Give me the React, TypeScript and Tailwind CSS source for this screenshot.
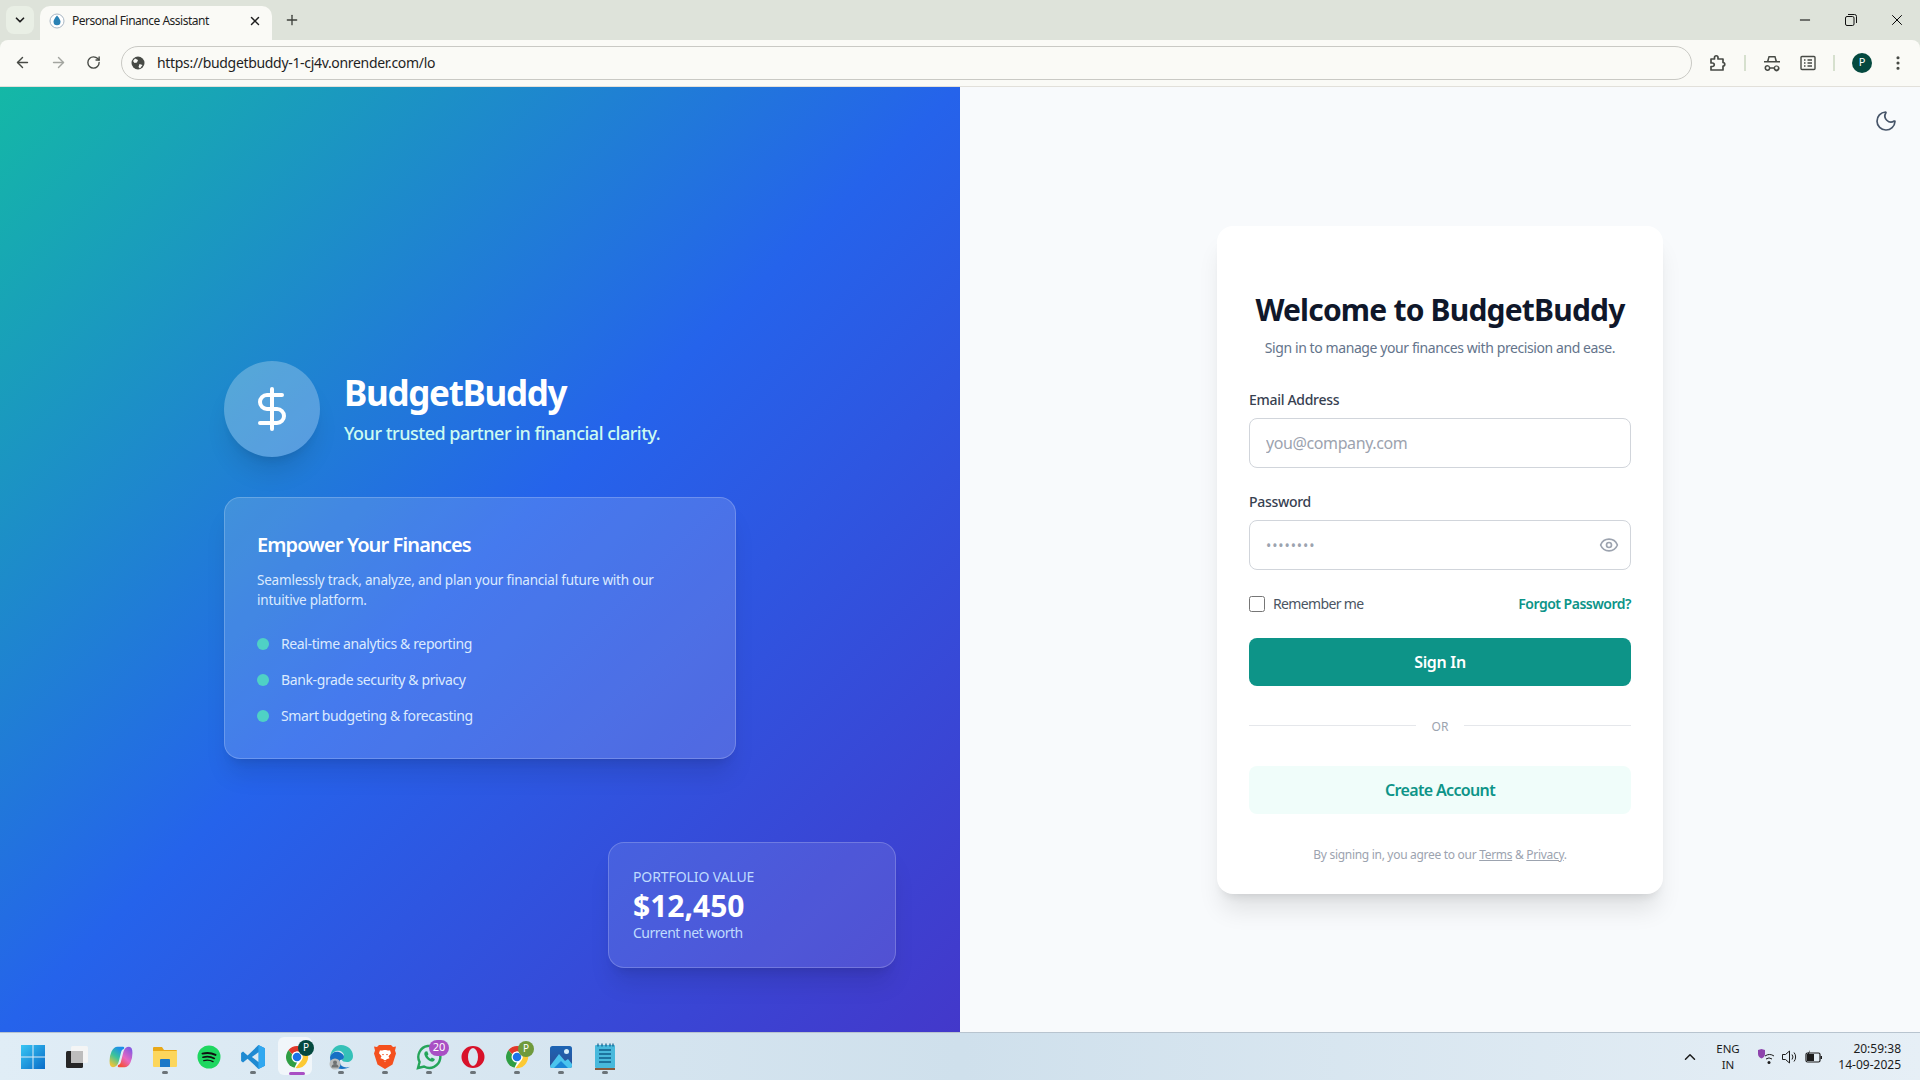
import { ArrowLeft, ArrowRight, ChevronDown, ChevronUp, DollarSign, EllipsisVertical, Eye, Minus, Moon, Plus, RotateCw, X } from "lucide-react";
import type { ReactNode } from "react";

function ChromeLogo({ size = 24 }: { size?: number }) {
  return (
    <svg width={size} height={size} viewBox="0 0 48 48">
      <circle cx="24" cy="24" r="22" fill="#fff" />
      <path d="M7.03 9.95 14.47 18.5 24 35 19 45.4A22 22 0 0 1 7.03 9.95Z" fill="#2f9e44" />
      <path d="M43.05 13H24a11 11 0 0 1 9.53 16.5L21 46A22 22 0 0 0 43.05 13Z" fill="#fcc934" />
      <path d="M24 2a22 22 0 0 1 19.05 11H24a11 11 0 0 0-9.53 5.5L7.03 9.95A22 22 0 0 1 24 2Z" fill="#e0392b" />
      <circle cx="24" cy="24" r="11" fill="#fff" />
      <circle cx="24" cy="24" r="8.5" fill="#1a73e8" />
    </svg>
  );
}

function Badge({ text, className }: { text: string; className: string }) {
  return (
    <span className={`absolute flex items-center justify-center rounded-full text-white font-['Noto_Sans',sans-serif] ${className}`}>
      {text}
    </span>
  );
}

const windowsIcon = (
  <svg width="24" height="24" viewBox="0 0 24 24">
    <defs>
      <linearGradient id="win" x1="0" y1="0" x2="1" y2="1">
        <stop offset="0" stopColor="#38c6f4" />
        <stop offset="1" stopColor="#0a6cc8" />
      </linearGradient>
    </defs>
    <path d="M0 0h11.5v11.5H0zM12.5 0H24v11.5H12.5zM0 12.5h11.5V24H0zM12.5 12.5H24V24H12.5z" fill="url(#win)" />
  </svg>
);

const taskViewIcon = (
  <svg width="24" height="24" viewBox="0 0 24 24">
    <rect x="6" y="1" width="17" height="17" rx="1.5" fill="#f4f5f5" />
    <rect x="1" y="6" width="17" height="17" rx="1.5" fill="#262626" />
    <rect x="6" y="6" width="12" height="12" fill="#bdbdbd" />
  </svg>
);

const copilotIcon = (
  <svg width="24" height="22" viewBox="0 0 24 22">
    <defs>
      <linearGradient id="copilotLeft" x1="0.7" y1="0" x2="0.2" y2="1">
        <stop offset="0" stopColor="#1c8fe8" />
        <stop offset="0.5" stopColor="#3cc49a" />
        <stop offset="1" stopColor="#e8c43c" />
      </linearGradient>
      <linearGradient id="copilotRight" x1="0.8" y1="0" x2="0.2" y2="1">
        <stop offset="0" stopColor="#8a5ae0" />
        <stop offset="0.55" stopColor="#e868c0" />
        <stop offset="1" stopColor="#f4503c" />
      </linearGradient>
    </defs>
    <path
      d="M8.500 2H14c-1.500.3-2.500 1.500-3 3.500L8.500 15.500C7.800 18 6 20 4 20 2.500 20 1.800 18 1.800 15c0-6.500 2.700-13 6.700-13Z"
      fill="url(#copilotLeft)"
      stroke="url(#copilotLeft)"
      strokeWidth="2.500"
      strokeLinejoin="round"
    />
    <path
      d="M15.500 20H10c1.500-.3 2.500-1.500 3-3.500l2.500-10C16.200 4 18 2 20 2c1.500 0 2.200 2 2.200 5 0 6.500-2.700 13-6.700 13Z"
      fill="url(#copilotRight)"
      stroke="url(#copilotRight)"
      strokeWidth="2.500"
      strokeLinejoin="round"
    />
  </svg>
);

const filesIcon = (
  <svg width="26" height="26" viewBox="0 0 26 26">
    <path d="M1 4a1 1 0 0 1 1-1h8l2 3h12a1 1 0 0 1 1 1v2H1Z" fill="#e8a818" />
    <path d="M1 7h24v15a1 1 0 0 1-1 1H2a1 1 0 0 1-1-1Z" fill="#fcd65c" />
    <path d="M8 16a1 1 0 0 1 1-1h8a1 1 0 0 1 1 1v7H8Z" fill="#1a78c8" />
  </svg>
);

const spotifyIcon = (
  <svg width="24" height="24" viewBox="0 0 24 24">
    <circle cx="12" cy="12" r="11.5" fill="#1ed760" />
    <g fill="none" stroke="#111" strokeLinecap="round">
      <path d="M5.5 8.6c4.5-1.2 9-.8 13 1.3" strokeWidth="2" />
      <path d="M6 12.2c4-1 8-.6 11.3 1.2" strokeWidth="1.7" />
      <path d="M6.8 15.6c3.2-.8 6.4-.5 9.2 1" strokeWidth="1.4" />
    </g>
  </svg>
);

const vscodeIcon = (
  <svg width="26" height="26" viewBox="0 0 24 24">
    <path d="M17 1 23 4v16l-6 3-10-9.5L2.8 17 1 15.8V8.2L2.8 7 7 10.500Z" fill="#1f8ad2" />
    <path d="M17 1 23 4v16l-6 3Z" fill="#31a8f0" />
    <path d="M17 7.500 11 12l6 4.500Z" fill="#dceaf3" />
  </svg>
);

const edgeIcon = (
  <svg width="26" height="26" viewBox="0 0 26 26">
    <path d="M13 1c7 0 12 5 12 11 0 4-3 6-6 6-3 0-5-1-5-2 0-1 2-1 2-4 0-4-4-6-8-5-3 1-5 3-6 6C3 6 7 1 13 1Z" fill="#35c1b8" />
    <path d="M2 13c1-4 5-6 9-5 3 1 5 3 5 5 0 2-2 3-4 3-1 3 1 6 4 7 3 1 6 0 7-1-2 2-6 3-9 3C7 25 2 20 2 13Z" fill="#1670c4" />
    <circle cx="7" cy="20" r="5.500" fill="#b9bcbc" />
    <circle cx="7" cy="18.500" r="2" fill="#6f7272" />
    <path d="M3.500 23.500a3.500 3.500 0 0 1 7 0Z" fill="#6f7272" />
  </svg>
);

const braveIcon = (
  <svg width="24" height="26" viewBox="0 0 24 26">
    <path d="M6 1h12l2 2 3-.5-1 4 1 3-3.500 11L12 25l-7.500-4.500L1 9.500l1-3-1-4 3 .5Z" fill="#f4501e" />
    <path d="M12 6c2 0 3 .8 5 .3l1 3-2.500 3 1 2-3 1-1.500 3-1.500-3-3-1 1-2L6 9.300l1-3c2 .5 3-.3 5-.3Z" fill="#fff" />
    <path d="M9 10h2l-1 1.500ZM13 10h2l-1 1.500ZM10.500 16h3L12 17.500Z" fill="#f4501e" />
  </svg>
);

const whatsappIcon = (
  <svg width="26" height="26" viewBox="0 0 26 26">
    <path d="M2 24l1.600-6A11 11 0 1 1 8 22.500Z" fill="none" stroke="#25a55a" strokeWidth="2.400" />
    <path d="M9.500 7.500c-1 .5-1.500 2-1 3.500 1 3 3.500 5.500 6.500 6.500 1.500.4 3 0 3.500-1.200l.3-1.300-3-1.500-1 1.200c-1.500-.6-2.700-1.800-3.300-3.300l1-1.200-1.300-2.900Z" fill="#25a55a" />
  </svg>
);

const operaIcon = (
  <svg width="24" height="24" viewBox="0 0 24 24">
    <path
      fillRule="evenodd"
      d="M12 1a11.500 11 0 1 1 0 22 11.500 11 0 0 1 0-22Zm0 2a5 9 0 1 0 0 18 5 9 0 0 0 0-18Z"
      fill="#d8122a"
    />
  </svg>
);

const photosIcon = (
  <svg width="24" height="24" viewBox="0 0 24 24">
    <defs>
      <linearGradient id="photo" x1="0" y1="0" x2="0" y2="1">
        <stop offset="0" stopColor="#1c64b4" />
        <stop offset="1" stopColor="#2e4f96" />
      </linearGradient>
    </defs>
    <rect x="1" y="1" width="22" height="22" rx="2.500" fill="url(#photo)" />
    <circle cx="17.500" cy="6.500" r="2.500" fill="#d6eefa" />
    <path d="M1 21 10 9l6 7 3-2 4 5v2a2 2 0 0 1-2 2H3a2 2 0 0 1-2-2Z" fill="#4ac4ee" />
    <path d="M5 23l7-7 7 7Z" fill="#1a86d6" />
  </svg>
);

const notepadIcon = (
  <svg width="22" height="28" viewBox="0 0 22 28">
    <rect x="1" y="2" width="20" height="23" rx="1" fill="#48b9dc" />
    <rect x="1" y="25" width="20" height="2" fill="#8a5a3c" />
    <path d="M5 7h12M5 11h12M5 15h12M5 19h12" stroke="#0f5d8a" strokeWidth="1.600" />
    <path d="M4 .5v3M8 .5v3M12 .5v3M16 .5v3M19 .5v3" stroke="#0f5d8a" strokeWidth="1.200" />
  </svg>
);

interface TaskbarApp {
  id: string;
  icon: ReactNode;
  running?: boolean;
  active?: boolean;
}

const apps: TaskbarApp[] = [
  { id: "start", icon: windowsIcon },
  { id: "taskview", icon: taskViewIcon },
  { id: "copilot", icon: copilotIcon },
  { id: "files", icon: filesIcon, running: true },
  { id: "spotify", icon: spotifyIcon },
  { id: "vscode", icon: vscodeIcon, running: true },
  {
    id: "chrome",
    active: true,
    icon: (
      <>
        <ChromeLogo size={24} />
        <Badge text="P" className="left-[13px] top-[-5px] h-4 w-4 bg-[#04493f] text-[10px]" />
      </>
    ),
  },
  { id: "edge", icon: edgeIcon, running: true },
  { id: "brave", icon: braveIcon, running: true },
  {
    id: "whatsapp",
    running: true,
    icon: (
      <>
        {whatsappIcon}
        <Badge text="20" className="left-[13px] top-[-4px] h-4 w-5 bg-[#a94fc4] text-[11px]" />
      </>
    ),
  },
  { id: "opera", icon: operaIcon, running: true },
  {
    id: "chrome2",
    running: true,
    icon: (
      <>
        <ChromeLogo size={24} />
        <Badge text="P" className="left-[13px] top-[-4px] h-4 w-4 bg-[#6f9a3c] text-[10px]" />
      </>
    ),
  },
  { id: "photos", icon: photosIcon, running: true },
  { id: "notepad", icon: notepadIcon, running: true },
];

function BrowserChrome() {
  return (
    <div className="bg-[#dee3da] font-['Noto_Sans',sans-serif]">
      <div className="flex h-10 items-end">
        <div className="mb-[6px] ml-[6px] flex h-7 w-7 items-center justify-center rounded-lg bg-[#e9efe5]">
          <ChevronDown size={14} strokeWidth={3} className="text-[#1f1f1f]" />
        </div>
        <div className="relative ml-[6px] flex h-[34px] w-[232px] items-center rounded-t-[10px] bg-[#fafaf6] pb-[4px] pl-[9px] pr-[10px]">
          <svg width="16" height="16" viewBox="0 0 16 16">
            <circle cx="8" cy="8" r="7" fill="#fff" stroke="#a9b7c4" />
            <path d="M8 2.500c2.200 2.700 3.500 4.500 3.500 6.300a3.500 3.500 0 0 1-7 0C4.500 7 5.800 5.200 8 2.500Z" fill="#2a82b4" />
          </svg>
          <span className="ml-[7px] flex-1 text-[12px] tracking-[-0.5px] text-[#1f1f1f]">Personal Finance Assistant</span>
          <X size={14} strokeWidth={2.5} className="text-[#1f1f1f]" />
        </div>
        <Plus size={16} strokeWidth={2} className="mb-[12px] ml-[12px] text-[#3c3f3a]" />
        <div className="flex-1" />
        <div className="mb-[7px] flex h-[26px] items-center">
          <span className="flex w-[46px] justify-center"><Minus size={16} strokeWidth={1.5} className="text-black" /></span>
          <span className="flex w-[46px] justify-center">
            <svg width="12" height="12" viewBox="0 0 12 12" fill="none" stroke="#111">
              <rect x="0.5" y="2.500" width="8.500" height="9" rx="1.500" />
              <path d="M3 .5h6.500a2 2 0 0 1 2 2V9" />
            </svg>
          </span>
          <span className="flex w-[46px] justify-center"><X size={18} strokeWidth={1.3} className="text-black" /></span>
        </div>
      </div>
      <div className="flex h-[47px] items-center rounded-t-lg border-b border-[#e2e0da] bg-[#fafaf6] pb-[1px]">
        <ArrowLeft size={17} strokeWidth={2} className="ml-[14px] text-[#474a45]" />
        <ArrowRight size={17} strokeWidth={2} className="ml-[19px] text-[#a3a5a0]" />
        <RotateCw size={15} strokeWidth={2.2} className="ml-[19px] text-[#474a45]" />
        <div className="ml-[20px] flex h-[34px] w-[1571px] items-center rounded-full border border-[#c9c9c4] pl-[8px]">
          <svg width="16" height="16" viewBox="0 0 16 16">
            <circle cx="8" cy="8" r="6.500" fill="#474a45" />
            <path d="M5 3.500 8 5 7 7.500 4.500 8 3 6ZM9.500 9l3 1-2.500 3.500L8.500 12Z" fill="#fafaf6" />
          </svg>
          <span className="ml-[11px] text-[14px] tracking-[-0.32px] text-[#1f1f1f]">https://budgetbuddy-1-cj4v.onrender.com/lo</span>
        </div>
        <svg width="20" height="20" viewBox="0 0 20 20" fill="none" stroke="#474a45" strokeWidth="1.700" className="ml-[16px]">
          <path d="M3 6h3.500V4.500a1.700 1.700 0 0 1 3.500 0V6h5v3.500a1.700 1.700 0 0 1 0 3.500V17H3v-3.500h1.500a1.700 1.700 0 0 0 0-3.500H3Z" strokeLinejoin="round" />
        </svg>
        <span className="ml-[16px] h-[16px] w-[2px] bg-[#d6e0ce]" />
        <svg width="20" height="20" viewBox="0 0 20 20" fill="#474a45" className="ml-[16px]">
          <path d="M6.500 3h7l1.500 5h3v1.500H2V8h3Zm1 1.500L6.700 8h6.600l-.8-3.500Z" />
          <path d="M5.500 12a3 3 0 1 0 2.900 3.800h3.200A3 3 0 1 0 11.800 14.300H8.200A3 3 0 0 0 5.500 12Zm0 1.600a1.400 1.400 0 1 1 0 2.800 1.400 1.400 0 0 1 0-2.800Zm9 0a1.400 1.400 0 1 1 0 2.800 1.400 1.400 0 0 1 0-2.800Z" />
        </svg>
        <svg width="16" height="16" viewBox="0 0 16 16" fill="none" stroke="#474a45" strokeWidth="1.400" className="ml-[18px]">
          <rect x="1" y="1.500" width="14" height="13" rx="1" />
          <path d="M4 5h1.500M7.500 5H12M4 8h1.500M7.500 8H12M4 11h1.500M7.500 11H12" />
        </svg>
        <span className="ml-[17px] h-[16px] w-[2px] bg-[#d6e0ce]" />
        <span className="ml-[17px] flex h-5 w-5 items-center justify-center rounded-full bg-[#04493f] text-[11px] text-white">P</span>
        <EllipsisVertical size={18} strokeWidth={2.2} className="ml-[17px] text-[#474a45]" />
      </div>
    </div>
  );
}

function HeroPanel() {
  return (
    <div className="relative flex w-[960px] flex-col justify-center gap-10 bg-linear-to-br/srgb from-[#14b8a6] via-[#2563eb] to-[#4338ca] px-[224px] font-['Noto_Sans',sans-serif]">
      <div className="flex items-center gap-6">
        <div className="flex h-24 w-24 items-center justify-center rounded-full bg-white/25 shadow-xl">
          <DollarSign size={48} className="text-white" />
        </div>
        <div>
          <h1 className="pt-[2px] text-[35px] font-bold leading-10 tracking-[-1.3px] text-white">BudgetBuddy</h1>
          <p className="mt-[6px] text-[18px] font-medium leading-7 tracking-[-0.5px] text-[#ccfbf1]">Your trusted partner in financial clarity.</p>
        </div>
      </div>
      <div className="w-[512px] rounded-2xl border border-white/20 bg-white/15 p-8 shadow-xl">
        <h2 className="mb-[11px] pt-[1px] text-[20px] font-semibold leading-7 tracking-[-0.88px] text-white">Empower Your Finances</h2>
        <p className="text-[13.500px] leading-5 tracking-[-0.21px] text-[#dbeafe]">
          Seamlessly track, analyze, and plan your financial future with our intuitive platform.
        </p>
        <ul className="mt-6 flex flex-col gap-4">
          {["Real-time analytics & reporting", "Bank-grade security & privacy", "Smart budgeting & forecasting"].map((item) => (
            <li key={item} className="flex items-center gap-3 text-[14px] leading-5 tracking-[-0.38px] text-[#dbeafe]">
              <span className="h-3 w-3 rounded-full bg-[#4fd1c5]" />
              {item}
            </li>
          ))}
        </ul>
      </div>
      <div className="absolute bottom-16 right-16 h-[126px] w-72 rounded-2xl border border-white/20 bg-white/10 p-6 shadow-xl">
        <p className="text-[14px] leading-5 tracking-[-0.1px] text-[#bfdbfe]">PORTFOLIO VALUE</p>
        <p className="pt-[1px] text-[30px] font-bold leading-[35px] text-white">$12,450</p>
        <p className="text-[14px] leading-5 tracking-[-0.5px] text-[#bfdbfe]">Current net worth</p>
      </div>
    </div>
  );
}

function LoginPanel() {
  return (
    <div className="relative flex flex-1 items-center justify-center bg-[#f8fafc] font-['Noto_Sans',sans-serif]">
      <Moon size={24} strokeWidth={1.7} className="absolute right-[22px] top-[22px] text-[#475569]" />
      <div className="h-[668px] w-[446px] rounded-2xl bg-white px-8 pb-8 pt-[66px] shadow-xl">
        <h2 className="text-center text-[30px] font-bold leading-9 tracking-[-0.8px] text-[#0f172a]">Welcome to BudgetBuddy</h2>
        <p className="mt-[10px] text-center text-[14px] leading-5 tracking-[-0.41px] text-[#64748b]">
          Sign in to manage your finances with precision and ease.
        </p>
        <label className="mt-8 block text-[14px] font-medium leading-5 tracking-[-0.3px] text-[#374151]">Email Address</label>
        <input
          readOnly
          placeholder="you@company.com"
          className="mt-2 block h-[50px] w-full rounded-lg border border-[#d1d5db] bg-white px-4 text-[16px] tracking-[-0.4px] placeholder:text-[#9ca3af]"
        />
        <label className="mt-6 block text-[14px] font-medium leading-5 tracking-[-0.3px] text-[#374151]">Password</label>
        <div className="relative mt-2">
          <input
            readOnly
            placeholder="••••••••"
            className="block h-[50px] w-full rounded-lg border border-[#d1d5db] bg-white px-4 pt-[1px] text-[14px] tracking-[0.9px] placeholder:text-[#9ca3af]"
          />
          <Eye size={20} strokeWidth={2} className="absolute right-[12px] top-[15px] text-[#9ca3af]" />
        </div>
        <div className="mt-6 flex h-5 items-center justify-between text-[14px]">
          <label className="flex items-center gap-2 tracking-[-0.65px] text-[#4b5563]">
            <input type="checkbox" readOnly className="m-0 h-4 w-4" />
            Remember me
          </label>
          <a className="font-semibold tracking-[-0.5px] text-[#0d9488]">Forgot Password?</a>
        </div>
        <button className="mt-6 h-12 w-full rounded-lg bg-[#0d9488] text-[16px] font-semibold tracking-[-0.3px] text-white">Sign In</button>
        <div className="mt-[30px] flex h-5 items-center gap-4">
          <span className="h-px flex-1 bg-[#e5e7eb]" />
          <span className="pt-[2px] text-[12px] text-[#9ca3af]">OR</span>
          <span className="h-px flex-1 bg-[#e5e7eb]" />
        </div>
        <button className="mt-[30px] h-12 w-full rounded-lg bg-[#f0fdfa] text-[16px] font-semibold tracking-[-0.65px] text-[#0d9488]">Create Account</button>
        <p className="mt-[33px] text-center text-[12px] leading-4 tracking-[-0.3px] text-[#9ca3af]">
          By signing in, you agree to our <a className="underline">Terms</a> &amp; <a className="underline">Privacy</a>.
        </p>
      </div>
    </div>
  );
}

function Taskbar() {
  return (
    <div className="flex h-12 items-center border-t border-[#b8c4cf] bg-gradient-to-r from-[#e0edf6] via-[#cfe0ec] to-[#e6eff6] pl-[11px] pr-[19px] font-['Noto_Sans',sans-serif] text-[#1c1c1c]">
      {apps.map((app) => (
        <div key={app.id} className="relative flex h-[47px] w-11 items-center justify-center">
          {app.active && <span className="absolute left-[3px] top-[4px] h-[38px] w-[34px] rounded-md bg-white/60" />}
          <span className="relative flex items-center justify-center">{app.icon}</span>
          {app.running && <span className="absolute bottom-[6px] left-[19px] h-[3px] w-[6px] rounded-full bg-[#6b7378]" />}
          {app.active && <span className="absolute bottom-[5px] left-[14px] h-[3px] w-4 rounded-full bg-[#a94fc4]" />}
        </div>
      ))}
      <div className="flex-1" />
      <ChevronUp size={18} strokeWidth={2} className="text-[#1c1c1c]" />
      <div className="ml-[13px] w-[32px] text-center text-[11.500px] leading-4">
        <div>ENG</div>
        <div>IN</div>
      </div>
      <svg width="18" height="18" viewBox="0 0 18 18" className="ml-[13px]">
        <path d="M1 2l3.500-1L8 2v4c0 2-1.500 3.500-3.500 4.500C2.500 9.500 1 8 1 6Z" fill="#8e44ad" />
        <path d="M8 8a8 8 0 0 1 9 0M9 11a5 5 0 0 1 6 0" fill="none" stroke="#1c1c1c" strokeWidth="1" />
        <circle cx="12" cy="14.500" r="1.500" fill="#1c1c1c" />
      </svg>
      <svg width="18" height="16" viewBox="0 0 18 16" fill="none" stroke="#1c1c1c" strokeWidth="1" className="ml-[6px]">
        <path d="M1.500 5.500h3L8.500 2v12l-4-3.500h-3ZM11 5.500a4 4 0 0 1 0 5M13 3.500a7 7 0 0 1 0 9" />
      </svg>
      <svg width="18" height="14" viewBox="0 0 18 14" className="ml-[6px]">
        <rect x="1" y="3" width="14" height="9" rx="1.500" fill="none" stroke="#1c1c1c" strokeWidth="1.200" />
        <rect x="2" y="4" width="7" height="7" fill="#1c1c1c" />
        <rect x="15.500" y="6" width="1.500" height="3" fill="#1c1c1c" />
        <path d="M5 0 2 5h2l-1 3 3-4H4Z" fill="#1c1c1c" />
      </svg>
      <div className="ml-[12px] w-[66px] text-right text-[12px] leading-4">
        <div>20:59:38</div>
        <div>14-09-2025</div>
      </div>
    </div>
  );
}

export default function App() {
  return (
    <div className="flex h-[1080px] w-[1920px] flex-col overflow-hidden">
      <BrowserChrome />
      <div className="flex flex-1">
        <HeroPanel />
        <LoginPanel />
      </div>
      <Taskbar />
    </div>
  );
}
